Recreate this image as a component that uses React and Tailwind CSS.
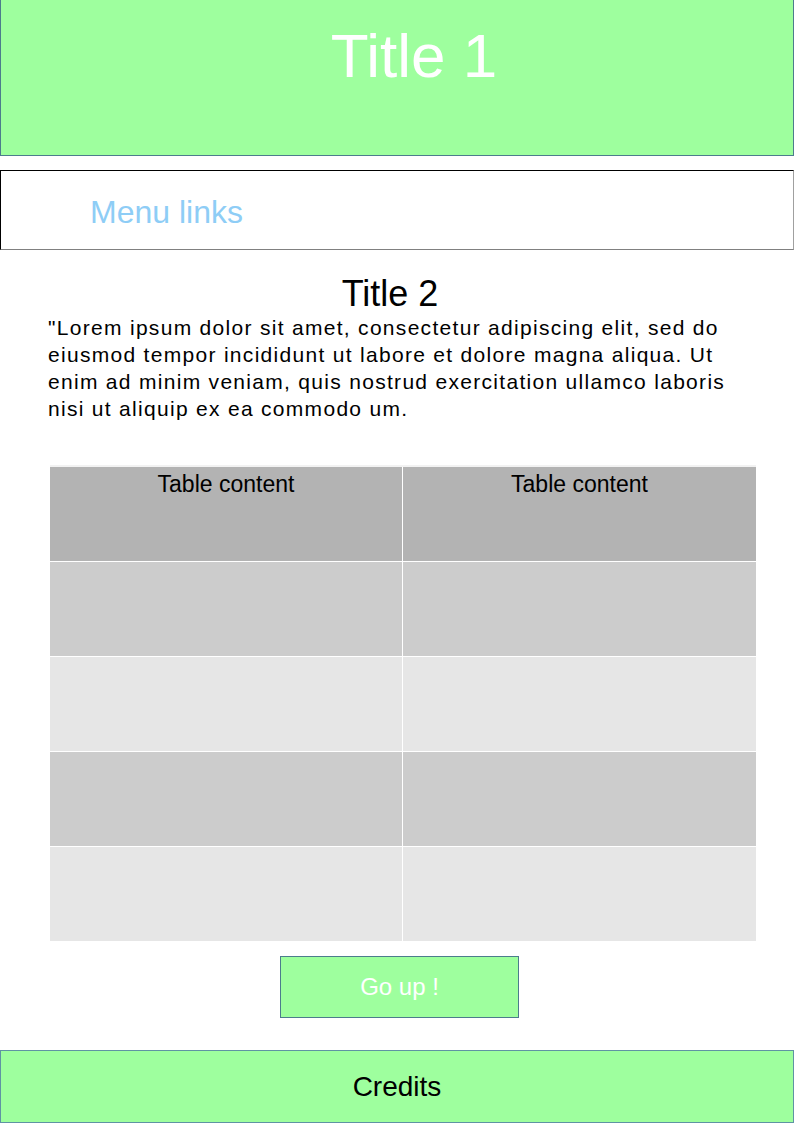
import React from 'react';

const rows = ['bg-[#cccccc]', 'bg-[#e6e6e6]', 'bg-[#cccccc]', 'bg-[#e6e6e6]'];

const App = () => {
    return (
        <div className="w-[794px] h-[1123px] bg-white flex flex-col font-['Liberation_Sans',Arial,sans-serif] text-black">
            {/* Header */}
            <header className="h-[156px] bg-[#9eff9e] border border-t-0 border-[#4c7c8c] pt-[21px] pl-[34px] text-center">
                <h1 className="text-[62px] leading-[70px] text-white">Title 1</h1>
            </header>

            {/* Menu */}
            <nav className="mt-[14px] h-[80px] border-t border-l border-black border-r border-b border-r-[#a0a0a0] border-b-[#808080] flex items-center pl-[89px] pt-[4px]">
                <span className="text-[32px] text-[#8ecdf6]">Menu links</span>
            </nav>

            {/* Content */}
            <main className="ml-[48px] w-[684px] pt-[24px]">
                <h2 className="text-[36px] leading-[40px] text-center">Title 2</h2>
                <p className="text-[21px] leading-[27px] tracking-[1.3px]">
                    "Lorem ipsum dolor sit amet, consectetur adipiscing elit, sed do eiusmod tempor incididunt ut labore et dolore magna aliqua. Ut enim ad minim veniam, quis nostrud exercitation ullamco laboris nisi ut aliquip ex ea commodo um.
                </p>
            </main>

            {/* Table */}
            <div className="ml-[50px] w-[706px] mt-[43px] border-t-2 border-[#f2f2f2] grid grid-cols-[352px_353px] gap-px bg-white">
                <div className="h-[94px] bg-[#b3b3b3] pt-[4px] text-center text-[23px] leading-[26px]">Table content</div>
                <div className="h-[94px] bg-[#b3b3b3] pt-[4px] text-center text-[23px] leading-[26px]">Table content</div>
                {rows.map((c, i) => (
                    <React.Fragment key={i}>
                        <div className={`h-[94px] ${c}`} />
                        <div className={`h-[94px] ${c}`} />
                    </React.Fragment>
                ))}
            </div>

            {/* Go up */}
            <div className="mt-[15px] pl-[280px]">
                <button className="w-[239px] h-[62px] bg-[#9eff9e] border border-[#4c7c8c] text-white text-[24px] flex items-center justify-center">
                    Go up !
                </button>
            </div>

            {/* Footer */}
            <footer className="mt-auto h-[73px] bg-[#9eff9e] border border-[#5f93a3] flex items-center justify-center">
                <span className="text-[28px]">Credits</span>
            </footer>
        </div>
    );
};

export default App;
